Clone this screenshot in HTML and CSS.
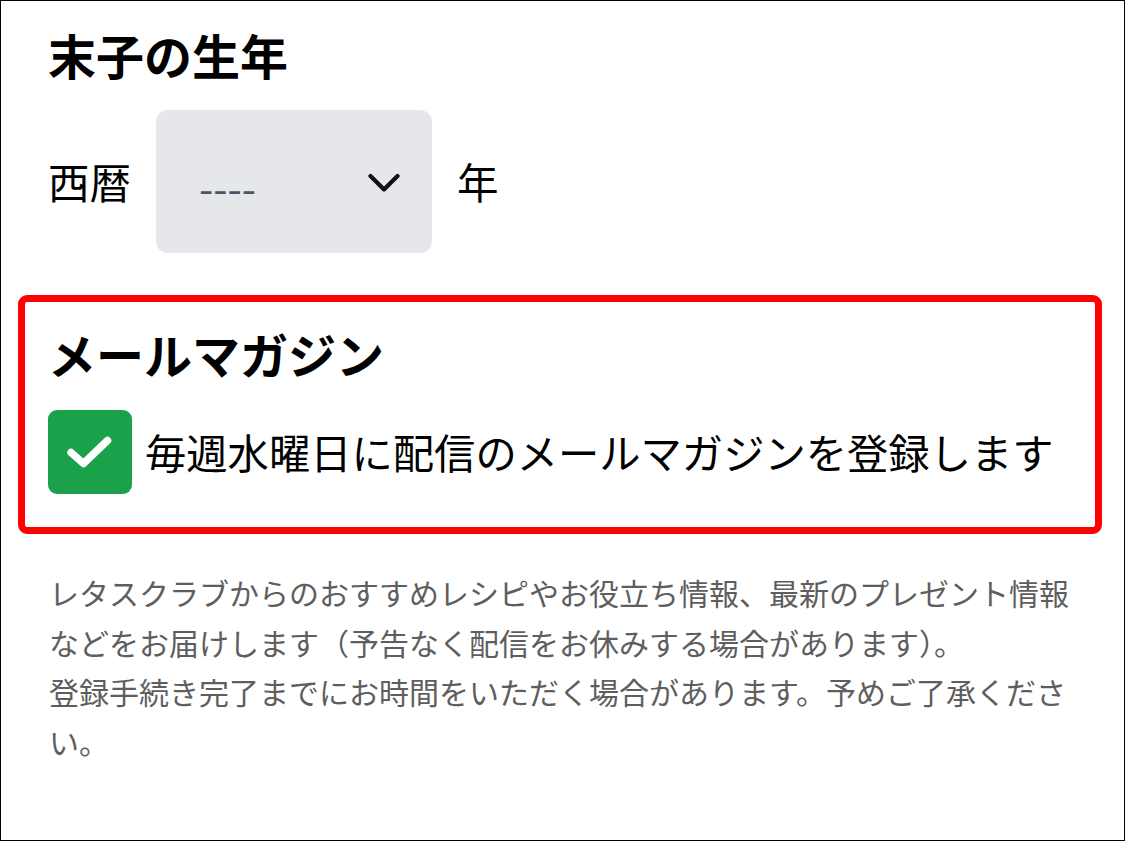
FILE: index.html
```html
<!DOCTYPE html>
<html lang="ja">
<head>
<meta charset="utf-8">
<title>末子の生年</title>
<link rel="stylesheet" href="styles.css">
</head>
<body>
<div class="page">
  <section class="birth">
    <h2 class="title">末子の生年</h2>
    <div class="year-row">
      <span class="label">西暦</span>
      <div class="select">
        <span class="placeholder">----</span>
        <svg class="chevron" width="32" height="20" viewBox="0 0 32 20"><polyline points="2.5,3 16,16.5 29.5,3" fill="none" stroke="#111" stroke-width="4.2" stroke-linecap="round" stroke-linejoin="round"/></svg>
      </div>
      <span class="label">年</span>
    </div>
  </section>

  <section class="mag">
    <h2 class="title">メールマガジン</h2>
    <label class="check-row">
      <span class="checkbox">
        <svg width="84" height="84" viewBox="0 0 84 84"><polyline points="23,42.5 35.5,53.5 59.5,30.5" fill="none" stroke="#fff" stroke-width="7.5" stroke-linecap="round" stroke-linejoin="round"/></svg>
      </span>
      <span class="check-text">毎週水曜日に配信のメールマガジンを登録します</span>
    </label>
  </section>

  <p class="note">レタスクラブからのおすすめレシピやお役立ち情報、最新のプレゼント情報などをお届けします（予告なく配信をお休みする場合があります）。<br>登録手続き完了までにお時間をいただく場合があります。予めご了承ください。</p>
</div>
</body>
</html>
```

FILE: styles.css
```css
* { box-sizing: border-box; }

html, body {
  margin: 0;
  padding: 0;
  background: #fff;
}

body {
  font-family: "Noto Sans CJK JP", "Noto Sans", sans-serif;
  color: #000;
}

.page {
  width: 1125px;
  height: 841px;
  border: 1px solid #000;
  overflow: hidden;
}

.title {
  margin: 0;
  font-size: 48px;
  font-weight: 700;
  line-height: 64px;
  letter-spacing: 0;
}

.birth {
  padding: 21px 0 0 47px;
}

.year-row {
  display: flex;
  align-items: center;
  gap: 25px;
  margin-top: 24px;
}

.label {
  font-size: 41.5px;
  line-height: 1.4;
}

.select {
  width: 276px;
  height: 143px;
  background: #e5e7eb;
  border-radius: 12px;
  display: flex;
  align-items: center;
  justify-content: space-between;
  padding: 0 32px 0 43px;
}

.placeholder {
  font-size: 41px;
  color: #4b5563;
  letter-spacing: 0;
  position: relative;
  top: 4px;
}

.chevron {
  display: block;
  margin-top: 2px;
}

.mag {
  margin: 42px 22px 0 17px;
  border: 7px solid #ff0000;
  border-radius: 9px;
  padding: 19px 0 33px 23px;
}

.check-row {
  display: flex;
  align-items: center;
  gap: 13px;
  margin-top: 25px;
}

.checkbox {
  width: 84px;
  height: 84px;
  flex: none;
  background: #1ca14b;
  border-radius: 9px;
  display: block;
}

.checkbox svg {
  display: block;
}

.check-text {
  font-size: 41.3px;
  line-height: 1.4;
  white-space: nowrap;
}

.note {
  margin: 34px 0 0 48px;
  width: 1030px;
  font-size: 30px;
  line-height: 49.5px;
  color: #5e5e5e;
}
```
